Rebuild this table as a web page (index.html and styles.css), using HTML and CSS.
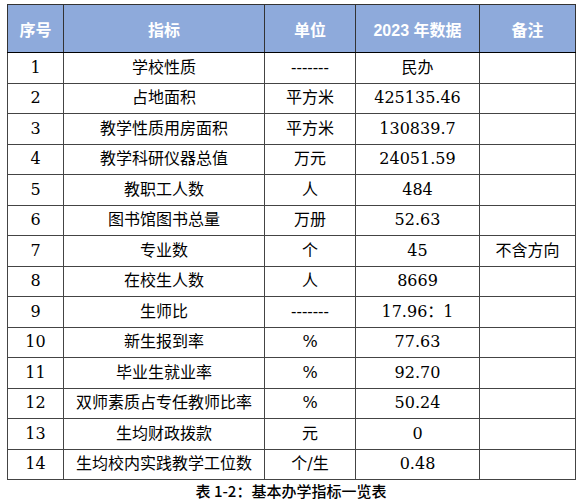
FILE: index.html
```html
<!DOCTYPE html>
<html lang="zh">
<head>
<meta charset="utf-8">
<link rel="stylesheet" href="styles.css">
</head>
<body>
<div class="page">
  <table class="stats">
    <colgroup>
      <col class="c1"><col class="c2"><col class="c3"><col class="c4"><col class="c5">
    </colgroup>
    <thead>
      <tr>
        <th>序号</th><th>指标</th><th>单位</th><th>2023 年数据</th><th>备注</th>
      </tr>
    </thead>
    <tbody>
      <tr><td>1</td><td>学校性质</td><td>-------</td><td>民办</td><td></td></tr>
      <tr><td>2</td><td>占地面积</td><td>平方米</td><td>425135.46</td><td></td></tr>
      <tr><td>3</td><td>教学性质用房面积</td><td>平方米</td><td>130839.7</td><td></td></tr>
      <tr><td>4</td><td>教学科研仪器总值</td><td>万元</td><td>24051.59</td><td></td></tr>
      <tr><td>5</td><td>教职工人数</td><td>人</td><td>484</td><td></td></tr>
      <tr><td>6</td><td>图书馆图书总量</td><td>万册</td><td>52.63</td><td></td></tr>
      <tr><td>7</td><td>专业数</td><td>个</td><td>45</td><td>不含方向</td></tr>
      <tr><td>8</td><td>在校生人数</td><td>人</td><td>8669</td><td></td></tr>
      <tr><td>9</td><td>生师比</td><td>-------</td><td>17.96：1</td><td></td></tr>
      <tr><td>10</td><td>新生报到率</td><td>%</td><td>77.63</td><td></td></tr>
      <tr><td>11</td><td>毕业生就业率</td><td>%</td><td>92.70</td><td></td></tr>
      <tr><td>12</td><td>双师素质占专任教师比率</td><td>%</td><td>50.24</td><td></td></tr>
      <tr><td>13</td><td>生均财政拨款</td><td>元</td><td>0</td><td></td></tr>
      <tr><td>14</td><td>生均校内实践教学工位数</td><td>个/生</td><td>0.48</td><td></td></tr>
    </tbody>
  </table>
  <p class="caption">表 1-2：基本办学指标一览表</p>
</div>
</body>
</html>
```

FILE: styles.css
```css
html, body {
  margin: 0;
  padding: 0;
  background: #ffffff;
}

.page {
  padding: 4px 0 0 7px;
  width: 568px;
}

.stats {
  border-collapse: collapse;
  table-layout: fixed;
  width: 568px;
  font-family: "DejaVu Serif", "Noto Sans CJK SC", serif;
  font-size: 16px;
  color: #000;
}

.c1 { width: 56px; }
.c2 { width: 201px; }
.c3 { width: 91px; }
.c4 { width: 124px; }
.c5 { width: 96px; }

.stats th {
  height: 47px;
  padding: 0;
  background: #8eaadb;
  color: #ffffff;
  font-family: "Liberation Sans", "Noto Sans CJK SC", sans-serif;
  font-weight: bold;
  font-size: 16px;
  border: 1px solid #333;
  border-bottom-color: #000;
  text-align: center;
  vertical-align: middle;
}

.stats td {
  height: 29.5px;
  padding: 0;
  border: 1px solid #444;
  text-align: center;
  vertical-align: middle;
  line-height: 20px;
  white-space: nowrap;
}

.caption {
  margin: 0;
  text-align: center;
  font-family: "Noto Sans CJK SC", sans-serif;
  font-weight: 500;
  font-size: 15px;
  line-height: 22px;
  color: #000;
}
```
